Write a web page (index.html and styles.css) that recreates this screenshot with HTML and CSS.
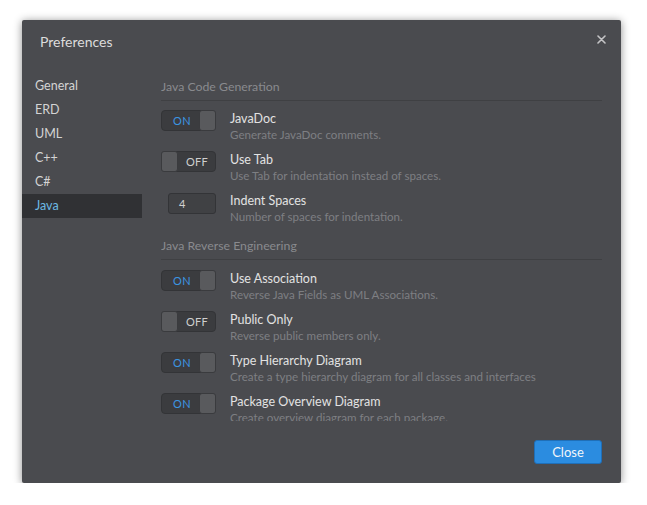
FILE: index.html
```html
<!DOCTYPE html>
<html>
<head>
<meta charset="utf-8">
<link rel="stylesheet" href="styles.css">
</head>
<body>
<div class="dialog">
  <div class="header">
    <span class="title">Preferences</span>
    <svg class="close-x" width="9" height="9" viewBox="0 0 9 9"><path d="M1 1L8 8M8 1L1 8" stroke="#c4c4c6" stroke-width="1.6" stroke-linecap="round"/></svg>
  </div>
  <div class="body">
    <ul class="sidebar">
      <li>General</li>
      <li>ERD</li>
      <li>UML</li>
      <li>C++</li>
      <li>C#</li>
      <li class="active">Java</li>
    </ul>
    <div class="content">
      <div class="section">Java Code Generation</div>
      <div class="row">
        <div class="ctl"><div class="toggle on"><span class="lbl">ON</span><span class="knob"></span></div></div>
        <div class="text"><div class="name">JavaDoc</div><div class="desc">Generate JavaDoc comments.</div></div>
      </div>
      <div class="row">
        <div class="ctl"><div class="toggle off"><span class="knob"></span><span class="lbl">OFF</span></div></div>
        <div class="text"><div class="name">Use Tab</div><div class="desc">Use Tab for indentation instead of spaces.</div></div>
      </div>
      <div class="row">
        <div class="ctl"><div class="num">4</div></div>
        <div class="text"><div class="name">Indent Spaces</div><div class="desc">Number of spaces for indentation.</div></div>
      </div>
      <div class="section">Java Reverse Engineering</div>
      <div class="row">
        <div class="ctl"><div class="toggle on"><span class="lbl">ON</span><span class="knob"></span></div></div>
        <div class="text"><div class="name">Use Association</div><div class="desc">Reverse Java Fields as UML Associations.</div></div>
      </div>
      <div class="row">
        <div class="ctl"><div class="toggle off"><span class="knob"></span><span class="lbl">OFF</span></div></div>
        <div class="text"><div class="name">Public Only</div><div class="desc">Reverse public members only.</div></div>
      </div>
      <div class="row">
        <div class="ctl"><div class="toggle on"><span class="lbl">ON</span><span class="knob"></span></div></div>
        <div class="text"><div class="name">Type Hierarchy Diagram</div><div class="desc">Create a type hierarchy diagram for all classes and interfaces</div></div>
      </div>
      <div class="row">
        <div class="ctl"><div class="toggle on"><span class="lbl">ON</span><span class="knob"></span></div></div>
        <div class="text"><div class="name">Package Overview Diagram</div><div class="desc">Create overview diagram for each package.</div></div>
      </div>
    </div>
  </div>
  <div class="footer">
    <button class="btn">Close</button>
  </div>
</div>
</body>
</html>
```
FILE: styles.css
```css
* { box-sizing: border-box; }
html, body { margin: 0; padding: 0; background: #ffffff; }
body {
  font-family: Lato, "Open Sans", "Liberation Sans", sans-serif;
  padding: 20px 0 0 22px;
}
.dialog {
  width: 599px;
  height: 463px;
  background: #4a4b4f;
  border-radius: 2px;
  box-shadow: 0 1px 8px rgba(0,0,0,0.45);
  display: flex;
  flex-direction: column;
}
.header {
  height: 54px;
  flex: none;
  display: flex;
  align-items: flex-start;
  justify-content: space-between;
  padding: 12px 15px 0 18px;
}
.title {
  color: #dcdcdc;
  font-size: 14px;
  line-height: 20px;
}
.close-x { margin-top: 3px; }
.body {
  display: flex;
  height: 347px;
  flex: none;
}
.sidebar {
  list-style: none;
  margin: 0;
  padding: 0;
  width: 120px;
  flex: none;
}
.sidebar li {
  height: 24px;
  line-height: 24px;
  padding-left: 13px;
  color: #d4d4d4;
  font-size: 12.5px;
}
.sidebar li.active {
  background: #303134;
  color: #6cb9e4;
}
.content {
  flex: 1;
  margin: 0 19px 0 19px;
  overflow: hidden;
}
.section {
  color: #898a8e;
  font-size: 12.3px;
  line-height: 26px;
  border-bottom: 1px solid #3f4043;
  margin-bottom: 9px;
}
.row + .section { margin-top: 9px; margin-bottom: 10px; }
.row {
  display: flex;
  height: 32px;
  margin-bottom: 9px;
}
.ctl {
  width: 69px;
  flex: none;
  display: flex;
  justify-content: flex-end;
  padding-right: 14px;
}
.toggle {
  width: 55px;
  height: 21px;
  background: #3b3c3f;
  border: 1px solid #333437;
  border-radius: 4px;
  display: flex;
  align-items: stretch;
  font-size: 11px;
}
.toggle .knob {
  width: 17px;
  background: #595a5d;
  border: 1px solid #3a3b3e;
  border-radius: 3px;
  margin: -1px;
}
.toggle .lbl {
  flex: 1;
  display: flex;
  align-items: center;
  justify-content: center;
  letter-spacing: 0.3px;
}
.toggle.on .lbl { color: #3b95e2; padding-left: 2px; }
.toggle.off .lbl { color: #cfcfcf; padding-left: 2px; }
.num {
  margin-top: 1px;
  width: 48px;
  height: 21px;
  background: #404144;
  border: 1px solid #333437;
  border-radius: 3px;
  color: #d0d0d0;
  font-size: 11px;
  line-height: 19px;
  padding-left: 10px;
}
.text { flex: 1; padding-top: 1px; }
.name {
  color: #e2e2e2;
  font-size: 12.5px;
  line-height: 16px;
}
.desc {
  color: #7e7f83;
  font-size: 11.6px;
  line-height: 16px;
  white-space: nowrap;
}
.footer {
  flex: 1;
  display: flex;
  justify-content: flex-end;
  align-items: flex-start;
  padding: 19px 19px 0 0;
}
.btn {
  width: 68px;
  height: 24px;
  background: #2b8ce0;
  border: 1px solid #1f6fb8;
  border-radius: 3px;
  color: #f2f6fa;
  font-family: inherit;
  font-size: 13px;
  padding: 0;
}
```
